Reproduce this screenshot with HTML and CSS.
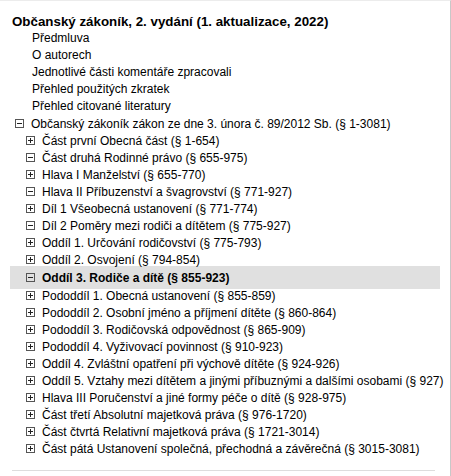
FILE: index.html
```
<!DOCTYPE html>
<html lang="cs">
<head>
<meta charset="utf-8">
<link rel="stylesheet" href="styles.css">
</head>
<body>
<div class="panel">
  <div class="title">Občanský zákoník, 2. vydání (1. aktualizace, 2022)</div>
  <div class="leaf">Předmluva</div>
  <div class="leaf">O autorech</div>
  <div class="leaf">Jednotlivé části komentáře zpracovali</div>
  <div class="leaf">Přehled použitých zkratek</div>
  <div class="leaf">Přehled citované literatury</div>
  <div class="node l0"><span class="tg minus"></span>Občanský zákoník zákon ze dne 3. února č. 89/2012 Sb. (§ 1-3081)</div>
  <div class="node"><span class="tg plus"></span>Část první Obecná část (§ 1-654)</div>
  <div class="node"><span class="tg minus"></span>Část druhá Rodinné právo (§ 655-975)</div>
  <div class="node"><span class="tg plus"></span>Hlava I Manželství (§ 655-770)</div>
  <div class="node"><span class="tg minus"></span>Hlava II Příbuzenství a švagrovství (§ 771-927)</div>
  <div class="node"><span class="tg plus"></span>Díl 1 Všeobecná ustanovení (§ 771-774)</div>
  <div class="node"><span class="tg minus"></span>Díl 2 Poměry mezi rodiči a dítětem (§ 775-927)</div>
  <div class="node"><span class="tg plus"></span>Oddíl 1. Určování rodičovství (§ 775-793)</div>
  <div class="node"><span class="tg plus"></span>Oddíl 2. Osvojení (§ 794-854)</div>
  <div class="node active"><span class="tg minus"></span>Oddíl 3. Rodiče a dítě (§ 855-923)</div>
  <div class="node"><span class="tg plus"></span>Pododdíl 1. Obecná ustanovení (§ 855-859)</div>
  <div class="node"><span class="tg plus"></span>Pododdíl 2. Osobní jméno a příjmení dítěte (§ 860-864)</div>
  <div class="node"><span class="tg plus"></span>Pododdíl 3. Rodičovská odpovědnost (§ 865-909)</div>
  <div class="node"><span class="tg plus"></span>Pododdíl 4. Vyživovací povinnost (§ 910-923)</div>
  <div class="node"><span class="tg plus"></span>Oddíl 4. Zvláštní opatření při výchově dítěte (§ 924-926)</div>
  <div class="node"><span class="tg plus"></span>Oddíl 5. Vztahy mezi dítětem a jinými příbuznými a dalšími osobami (§ 927)</div>
  <div class="node"><span class="tg plus"></span>Hlava III Poručenství a jiné formy péče o dítě (§ 928-975)</div>
  <div class="node"><span class="tg plus"></span>Část třetí Absolutní majetková práva (§ 976-1720)</div>
  <div class="node"><span class="tg plus"></span>Část čtvrtá Relativní majetková práva (§ 1721-3014)</div>
  <div class="node"><span class="tg plus"></span>Část pátá Ustanovení společná, přechodná a závěrečná (§ 3015-3081)</div>
  <div class="rule"></div>
</div>
</body>
</html>
```
FILE: styles.css
```
html, body {
  margin: 0;
  padding: 0;
  background: #fff;
}
body {
  font-family: Arial, "Liberation Sans", sans-serif;
  font-size: 12px;
  color: #000;
}
.panel {
  box-sizing: border-box;
  width: 451px;
  height: 476px;
  border-top: 1px solid #ececec;
  border-right: 1px solid #c8c8c8;
  padding: 12px 0 0 12px;
}
.title {
  font-weight: bold;
  font-size: 13.33px;
  line-height: 17px;
  white-space: nowrap;
}
.leaf {
  line-height: 17px;
  padding-left: 20px;
  white-space: nowrap;
}
.node {
  display: flex;
  align-items: center;
  height: 17px;
  padding-left: 14px;
  white-space: nowrap;
}
.node.l0 {
  padding-left: 3px;
}
.node.active {
  background: #e0e0e0;
  font-weight: bold;
  margin-left: -2px;
  padding-left: 16px;
  margin-right: 10px;
  height: 23px;
  margin-top: -2px;
  margin-bottom: -2px;
}
.tg {
  position: relative;
  box-sizing: border-box;
  width: 9px;
  height: 9px;
  border: 1px solid #555;
  margin-right: 7px;
  flex: none;
}
.tg::before {
  content: "";
  position: absolute;
  left: 1px;
  top: 3px;
  width: 5px;
  height: 1px;
  background: #222;
}
.tg.plus::after {
  content: "";
  position: absolute;
  left: 3px;
  top: 1px;
  width: 1px;
  height: 5px;
  background: #222;
}
.rule {
  height: 1px;
  background: #ddd;
  width: 423px;
  margin-top: 13px;
}
```
